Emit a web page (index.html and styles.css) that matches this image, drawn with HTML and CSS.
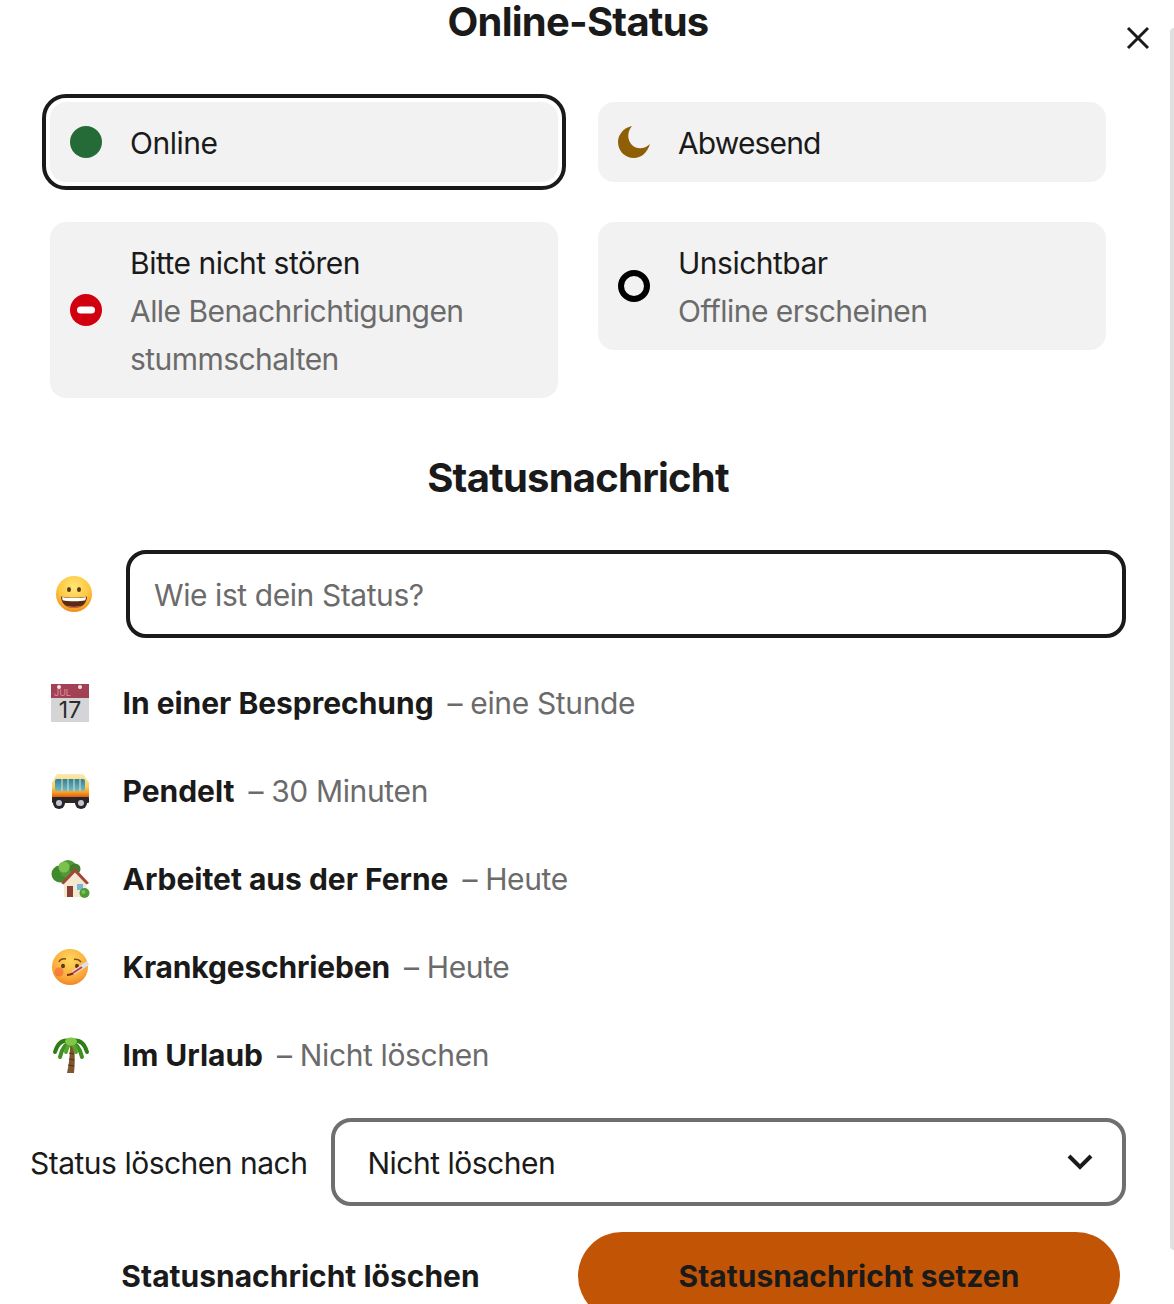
FILE: index.html
```html
<!DOCTYPE html>
<html lang="de">
<head>
  <meta charset="UTF-8">
  <meta name="viewport" content="width=device-width, initial-scale=1.0">
  <title>Online-Status</title>
  <link rel="stylesheet" href="styles.css">
</head>
<body>
  <div class="dialog">
    <button class="close-btn" aria-label="Schließen">
      <svg viewBox="0 0 24 24" width="24" height="24"><path d="M2 2L22 22M22 2L2 22" fill="none" stroke="#1a1a1a" stroke-width="3"/></svg>
    </button>
    <div class="scrollbar"></div>

    <h2 class="title">Online-Status</h2>
    <div class="status-grid">
      <div class="status-card selected">
        <span class="status-icon"><svg viewBox="0 0 32 32"><circle cx="16" cy="16" r="16" fill="#256b37"/></svg></span>
        <div class="status-text">Online</div>
      </div>
      <div class="status-card">
        <span class="status-icon"><svg viewBox="0 0 32 32"><path d="M14 0C5 2 0 9 0 16C0 25 7 32 16 32C23 32 29 27 32 18C27 23 19 24 14 19C9 14 9 6 14 0z" fill="#8f5f08"/></svg></span>
        <div class="status-text status-away">Abwesend</div>
      </div>
      <div class="status-card">
        <span class="status-icon"><svg viewBox="0 0 32 32"><circle cx="16" cy="16" r="16" fill="#d1000f"/><rect x="7" y="12.5" width="18" height="7" rx="3.5" fill="#fff"/></svg></span>
        <div class="status-text">Bitte nicht stören<div class="status-sub">Alle Benachrichtigungen stummschalten</div></div>
      </div>
      <div class="status-card">
        <span class="status-icon"><svg viewBox="0 0 32 32"><circle cx="16" cy="16" r="13" fill="none" stroke="#000" stroke-width="6"/></svg></span>
        <div class="status-text">Unsichtbar<div class="status-sub">Offline erscheinen</div></div>
      </div>
    </div>

    <h2 class="title message-title">Statusnachricht</h2>
    <div class="input-row">
      <span class="emoji-btn">
        <svg viewBox="0 0 38 38" width="38" height="38">
          <defs>
            <radialGradient id="face" cx="50%" cy="30%" r="72%"><stop offset="0" stop-color="#ffe778"/><stop offset="0.6" stop-color="#fdc63f"/><stop offset="1" stop-color="#ee8a1c"/></radialGradient>
          </defs>
          <circle cx="19" cy="19" r="18" fill="url(#face)"/>
          <ellipse cx="14" cy="14.500" rx="2" ry="2.600" fill="#5a3a12"/>
          <ellipse cx="24" cy="14.500" rx="2" ry="2.600" fill="#5a3a12"/>
          <path d="M6 21.500c5 1.500 21 1.500 26 0 0 7-5.500 11.500-13 11.500S6 28.500 6 21.500z" fill="#5b2c12"/>
          <path d="M7 22c5 1.200 19 1.200 24 0l-.6 3.200c-5 1.300-17.800 1.300-22.800 0z" fill="#fff"/>
          <path d="M11 30.500c4 1.500 12 1.500 16 0-2 1.500-5 2.300-8 2.300s-6-.8-8-2.300z" fill="#e0705c"/>
        </svg>
      </span>
      <input class="status-input" type="text" placeholder="Wie ist dein Status?">
    </div>

    <div class="preset-row">
      <span class="preset-icon">
        <svg viewBox="0 0 40 40" width="40" height="40">
          <rect x="1" y="1" width="38" height="38" fill="#d5d5d7"/>
          <rect x="1" y="1" width="38" height="14" fill="#a34154"/>
          <circle cx="9" cy="4" r="2" fill="#f3e7e7"/>
          <circle cx="30" cy="4" r="2" fill="#f3e7e7"/>
          <text x="4" y="13" class="cal-month">JUL</text>
          <text x="20" y="35" class="cal-day">17</text>
        </svg>
      </span>
      <span class="preset-name">In einer Besprechung</span>
      <span class="preset-time">– eine Stunde</span>
    </div>
    <div class="preset-row">
      <span class="preset-icon">
        <svg viewBox="0 0 40 40" width="40" height="40">
          <defs>
            <linearGradient id="busbody" x1="0" y1="0" x2="0" y2="1"><stop offset="0" stop-color="#fbe9b4"/><stop offset="0.5" stop-color="#fdd25a"/><stop offset="0.75" stop-color="#f79a1c"/><stop offset="1" stop-color="#d43f1a"/></linearGradient>
            <linearGradient id="buswin" x1="0" y1="0" x2="0" y2="1"><stop offset="0" stop-color="#2f7f9a"/><stop offset="1" stop-color="#72bccc"/></linearGradient>
          </defs>
          <path d="M5 6c0-2 2-3 4-3h22c2 0 4 1 4 3l3 4c1 1 1 2 1 3v15H2V13c0-1 0-2 1-3z" fill="url(#busbody)"/>
          <rect x="5" y="8" width="30" height="12" rx="2" fill="url(#buswin)"/>
          <path d="M12 8v12M18 8v12M24 8v12M30 8v12" stroke="#f5e3a8" stroke-width="1"/>
          <rect x="2" y="26" width="37" height="6" rx="1" fill="#2e2624"/>
          <circle cx="9" cy="32" r="6" fill="#26262a"/>
          <circle cx="9" cy="32" r="3" fill="#c3c6cc"/>
          <circle cx="31" cy="32" r="6" fill="#26262a"/>
          <circle cx="31" cy="32" r="3" fill="#c3c6cc"/>
        </svg>
      </span>
      <span class="preset-name">Pendelt</span>
      <span class="preset-time">– 30 Minuten</span>
    </div>
    <div class="preset-row">
      <span class="preset-icon">
        <svg viewBox="0 0 40 40" width="40" height="40">
          <circle cx="10" cy="15" r="8.500" fill="#3f8a2d"/>
          <circle cx="18" cy="10" r="9" fill="#4f9a35"/>
          <circle cx="25" cy="10" r="5.500" fill="#3f7f2a"/>
          <circle cx="14" cy="8" r="5.500" fill="#7cc04f"/>
          <path d="M14 24L25 12L36 24V38H14z" fill="#f3e7d0"/>
          <path d="M25 9L39 24L36.500 25.500L25 13.500L13.500 25.500L11 24z" fill="#a4463a"/>
          <rect x="17" y="27" width="6" height="11" fill="#8a3d33"/>
          <rect x="27" y="25" width="6" height="6" fill="#74b6dd"/>
          <circle cx="34.500" cy="34" r="5" fill="#4f9a35"/>
          <circle cx="33.500" cy="33" r="2" fill="#7cc04f"/>
        </svg>
      </span>
      <span class="preset-name">Arbeitet aus der Ferne</span>
      <span class="preset-time">– Heute</span>
    </div>
    <div class="preset-row">
      <span class="preset-icon">
        <svg viewBox="0 0 40 40" width="40" height="40">
          <defs>
            <radialGradient id="sick" cx="50%" cy="30%" r="75%"><stop offset="0" stop-color="#ffd75e"/><stop offset="0.7" stop-color="#fba838"/><stop offset="1" stop-color="#ee7a22"/></radialGradient>
          </defs>
          <circle cx="20" cy="20" r="18" fill="url(#sick)"/>
          <circle cx="9" cy="25" r="4.500" fill="#ee5a3c" opacity="0.55"/>
          <path d="M9 15c1-2.500 4-3.500 7-3M24 12.500c3-.5 5.500.5 7 2.500" fill="none" stroke="#7a4a16" stroke-width="1.500"/>
          <ellipse cx="13" cy="19" rx="2" ry="2.300" fill="#5a3a12"/>
          <ellipse cx="27" cy="19" rx="2" ry="2.300" fill="#5a3a12"/>
          <path d="M17 28c2 0 5-1 7-2" fill="none" stroke="#7a2a12" stroke-width="2"/>
          <path d="M23 26L38 16" stroke="#dde0e5" stroke-width="4.500"/>
          <path d="M23 26L32 20" stroke="#c83c3c" stroke-width="2"/>
        </svg>
      </span>
      <span class="preset-name preset-name-tight">Krankgeschrieben</span>
      <span class="preset-time">– Heute</span>
    </div>
    <div class="preset-row">
      <span class="preset-icon">
        <svg viewBox="0 0 40 40" width="40" height="40">
          <path d="M20 11c0 9-1 18-3 27h7c1-9 1-18 0-27z" fill="#80562e"/>
          <path d="M19 18l5 1M19 24l5 1M18 30l6 1" stroke="#4f3218" stroke-width="1.200"/>
          <g fill="none" stroke-linecap="round" stroke-width="4">
            <path d="M21 6Q9 3 5 17" stroke="#2f7d18"/>
            <path d="M21 6Q33 3 37 17" stroke="#2f7d18"/>
            <path d="M21 7Q13 9 10 22" stroke="#3f8f22"/>
            <path d="M21 7Q29 9 32 22" stroke="#3f8f22"/>
            <path d="M21 7Q17 11 16 17" stroke="#56a52a"/>
            <path d="M21 7Q25 11 26 17" stroke="#56a52a"/>
          </g>
          <ellipse cx="21" cy="6.500" rx="6" ry="4" fill="#7fc744"/>
        </svg>
      </span>
      <span class="preset-name">Im Urlaub</span>
      <span class="preset-time">– Nicht löschen</span>
    </div>

    <div class="clear-row">
      <span class="clear-label">Status löschen nach</span>
      <div class="select-box">
        <span>Nicht löschen</span>
        <svg viewBox="0 0 26 16" width="26" height="16"><path d="M2 2L13 13L24 2" fill="none" stroke="#1a1a1a" stroke-width="4"/></svg>
      </div>
    </div>

    <div class="action-row">
      <button class="btn">Statusnachricht löschen</button>
      <button class="btn btn-primary">Statusnachricht setzen</button>
    </div>
  </div>
</body>
</html>
```
FILE: styles.css
```css
html, body {
  margin: 0;
  padding: 0;
  height: 1304px;
  overflow: hidden;
  background: #fff;
}
body {
  font-family: Inter, "Liberation Sans", sans-serif;
  font-size: 30px;
  letter-spacing: -0.5px;
  color: #1a1a1a;
}
.dialog {
  position: relative;
  height: 1304px;
  box-sizing: border-box;
  padding: 0 48px 0 30px;
  overflow: hidden;
}
.close-btn {
  position: absolute;
  top: 26px;
  left: 1126px;
  width: 24px;
  height: 24px;
  padding: 0;
  border: 0;
  background: none;
}
.close-btn svg {
  display: block;
}
.scrollbar {
  position: absolute;
  top: 28px;
  right: 0;
  width: 4px;
  height: 1222px;
  background: #e0e0e0;
  border-radius: 4px 0 0 4px;
}
.title {
  margin: 0 0 58px;
  width: 1096px;
  font-size: 40px;
  line-height: 44px;
  font-weight: 700;
  text-align: center;
  letter-spacing: -0.78px;
}
.message-title {
  margin: 58px 0 50px;
}
.status-grid {
  display: grid;
  grid-template-columns: 508px 508px;
  gap: 40px;
  align-items: start;
  margin-left: 20px;
}
.status-card {
  display: flex;
  align-items: center;
  gap: 28px;
  padding: 17px 20px 15px;
  background: #f2f2f2;
  border-radius: 16px;
  line-height: 48px;
}
.status-card.selected {
  outline: 4px solid #1a1a1a;
  outline-offset: 4px;
}
.status-icon {
  flex: none;
  width: 32px;
  height: 32px;
  margin-bottom: 2px;
}
.status-icon svg {
  display: block;
  width: 32px;
  height: 32px;
}
.status-away {
  letter-spacing: -0.85px;
}
.status-sub {
  color: #6b6b6b;
  letter-spacing: -0.55px;
}
.input-row {
  display: flex;
  align-items: center;
  gap: 8px;
}
.emoji-btn {
  display: flex;
  flex: none;
  align-items: center;
  justify-content: center;
  width: 88px;
  height: 88px;
}
.status-input {
  flex: 1;
  height: 88px;
  box-sizing: border-box;
  padding: 2px 24px 0;
  border: 4px solid #1a1a1a;
  border-radius: 20px;
  font-family: inherit;
  font-size: 30px;
  letter-spacing: -0.42px;
  color: #1a1a1a;
  background: #fff;
}
.status-input::placeholder {
  color: #6b6b6b;
  opacity: 1;
}
.input-row + .preset-row {
  margin-top: 21px;
}
.preset-row {
  display: flex;
  align-items: center;
  height: 88px;
  padding-left: 20px;
}
.preset-icon {
  flex: none;
  width: 40px;
  height: 40px;
  margin-right: 32.5px;
}
.preset-icon svg {
  display: block;
}
.cal-month {
  font-family: Inter, "Liberation Sans", sans-serif;
  font-size: 9px;
  letter-spacing: 0;
  fill: #d9929f;
}
.cal-day {
  font-family: Inter, "Liberation Sans", sans-serif;
  font-size: 23px;
  letter-spacing: 0;
  fill: #2c2c2c;
  text-anchor: middle;
}
.preset-name {
  font-weight: 700;
  letter-spacing: -0.02px;
  margin-right: 14px;
}
.preset-name-tight {
  letter-spacing: -0.16px;
}
.preset-time {
  color: #6b6b6b;
  letter-spacing: -0.36px;
}
.clear-row {
  display: flex;
  align-items: center;
  gap: 24px;
  margin-top: 19px;
}
.clear-label {
  flex: none;
  padding-top: 2px;
}
.select-box {
  flex: 1;
  display: flex;
  align-items: center;
  justify-content: space-between;
  height: 88px;
  box-sizing: border-box;
  padding: 0 29px 0 32px;
  border: 4px solid #6f6f6f;
  border-radius: 20px;
}
.select-box span {
  padding-top: 2px;
}
.action-row {
  display: grid;
  grid-template-columns: 541px 542px;
  gap: 7px;
  margin-top: 26px;
}
.btn {
  height: 88px;
  padding: 0;
  border: 0;
  border-radius: 44px;
  background: none;
  font-family: inherit;
  font-size: 30px;
  font-weight: 700;
  letter-spacing: 0;
  color: #1a1a1a;
}
.btn-primary {
  background: #c25505;
}
```
